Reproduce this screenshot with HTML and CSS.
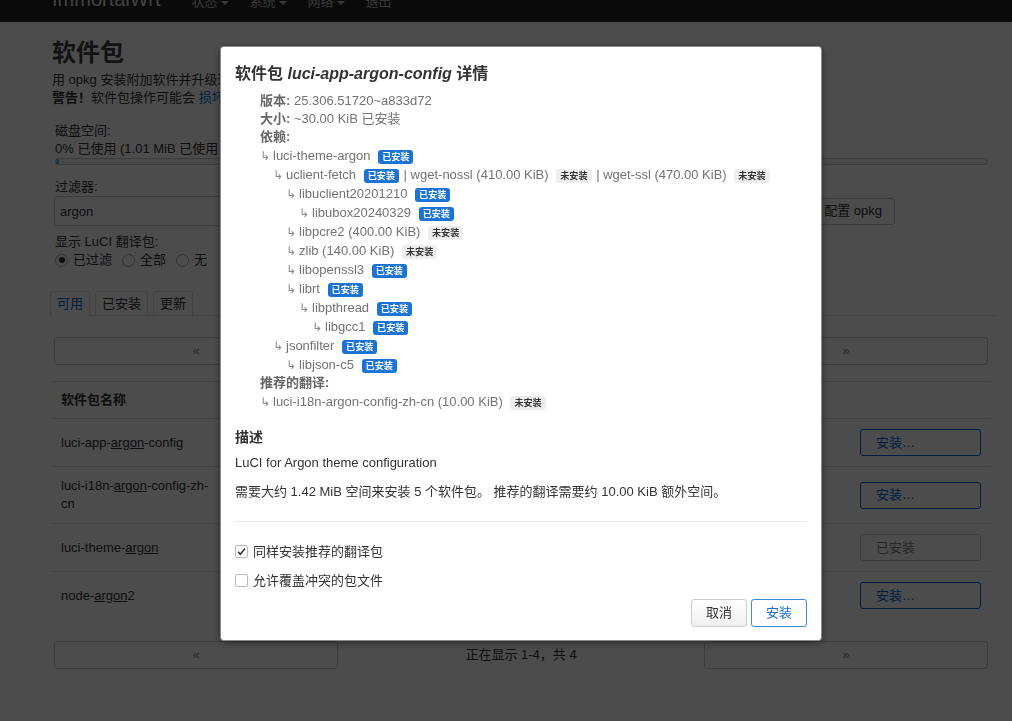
FILE: index.html
```html
<!DOCTYPE html>
<html lang="zh-CN">
<head>
    <meta charset="UTF-8">
    <meta name="viewport" content="width=device-width, initial-scale=1.0">
    <title>软件包 - ImmortalWrt</title>
    <link rel="stylesheet" href="styles.css">
</head>
<body>
    <header class="topbar">
        <div class="topbar-inner">
            <a href="#" class="brand">ImmortalWrt</a>
            <ul class="nav">
                <li><a href="#">状态</a><span class="caret"></span></li>
                <li><a href="#">系统</a><span class="caret"></span></li>
                <li><a href="#">网络</a><span class="caret"></span></li>
                <li><a href="#">退出</a></li>
            </ul>
        </div>
    </header>

    <div class="main">
        <h2>软件包</h2>
        <div class="intro">
            <p>用 opkg 安装附加软件并升级现有的软件包。</p>
            <p><strong>警告！</strong>软件包操作可能会 <a href="#">损坏你的设备</a>！</p>
        </div>

        <div class="controls">
            <div class="field">
                <div class="field-label">磁盘空间:</div>
                <div class="usage">0% 已使用 (1.01 MiB 已使用，共 423.18 MiB)</div>
                <div class="progress"><div class="progress-bar" style="width: 0.3%"></div></div>
            </div>
            <div class="field field-filter">
                <div class="field-label">过滤器:</div>
                <div class="filter-row">
                    <input type="text" class="form-input" value="argon">
                    <button class="btn">配置 opkg</button>
                </div>
            </div>
            <div class="field field-i18n">
                <div class="field-label">显示 LuCI 翻译包:</div>
                <div class="radios">
                    <span class="radio"><span class="dot on"></span>已过滤</span>
                    <span class="radio"><span class="dot"></span>全部</span>
                    <span class="radio"><span class="dot"></span>无</span>
                </div>
            </div>
        </div>

        <ul class="tabs">
            <li class="active">可用</li>
            <li>已安装</li>
            <li>更新</li>
        </ul>

        <div class="pager">
            <button class="btn pager-btn">&laquo;</button>
            <span class="pager-info">正在显示 1-4，共 4</span>
            <button class="btn pager-btn">&raquo;</button>
        </div>

        <table class="pkg-table">
            <colgroup>
                <col class="col-name">
                <col class="col-ver">
                <col class="col-size">
                <col>
                <col class="col-act">
            </colgroup>
            <thead>
                <tr><th>软件包名称</th><th>版本</th><th>大小 (.ipk)</th><th>描述</th><th></th></tr>
            </thead>
            <tbody>
                <tr>
                    <td>luci-app-<u>argon</u>-config</td>
                    <td>25.306.51720~a833d72</td>
                    <td>~30.00 KiB</td>
                    <td>LuCI for Argon theme configuration</td>
                    <td><button class="btn btn-action">安装…</button></td>
                </tr>
                <tr>
                    <td>luci-i18n-<u>argon</u>-config-zh-cn</td>
                    <td>25.306.51720~a833d72</td>
                    <td>~10.00 KiB</td>
                    <td>Translation for luci-app-argon-config</td>
                    <td><button class="btn btn-action">安装…</button></td>
                </tr>
                <tr>
                    <td>luci-theme-<u>argon</u></td>
                    <td>2.3.2-r20250207</td>
                    <td>~380.00 KiB</td>
                    <td>Argon theme</td>
                    <td><button class="btn btn-action" disabled>已安装</button></td>
                </tr>
                <tr>
                    <td>node-<u>argon</u>2</td>
                    <td>0.31.2-r1</td>
                    <td>~60.00 KiB</td>
                    <td>Node.js package for hashing passwords</td>
                    <td><button class="btn btn-action">安装…</button></td>
                </tr>
            </tbody>
        </table>

        <div class="pager pager-bottom">
            <button class="btn pager-btn">&laquo;</button>
            <span class="pager-info">正在显示 1-4，共 4</span>
            <button class="btn pager-btn">&raquo;</button>
        </div>
    </div>

    <div class="overlay">
        <div class="modal">
            <h4>软件包 <em>luci-app-argon-config</em> 详情</h4>
            <ul class="pkg-info">
                <li class="kv"><strong>版本:</strong> 25.306.51720~a833d72</li>
                <li class="kv"><strong>大小:</strong> ~30.00 KiB 已安装</li>
                <li>
                    <div class="kv"><strong>依赖:</strong></div>
                    <div class="dep"><span class="arr">↳</span>luci-theme-argon <span class="label">已安装</span></div>
                    <div class="dep lv1"><span class="arr">↳</span>uclient-fetch <span class="label">已安装</span> | wget-nossl (410.00 KiB) <span class="label na">未安装</span> | wget-ssl (470.00 KiB) <span class="label na">未安装</span></div>
                    <div class="dep lv2"><span class="arr">↳</span>libuclient20201210 <span class="label">已安装</span></div>
                    <div class="dep lv3"><span class="arr">↳</span>libubox20240329 <span class="label">已安装</span></div>
                    <div class="dep lv2"><span class="arr">↳</span>libpcre2 (400.00 KiB) <span class="label na">未安装</span></div>
                    <div class="dep lv2"><span class="arr">↳</span>zlib (140.00 KiB) <span class="label na">未安装</span></div>
                    <div class="dep lv2"><span class="arr">↳</span>libopenssl3 <span class="label">已安装</span></div>
                    <div class="dep lv2"><span class="arr">↳</span>librt <span class="label">已安装</span></div>
                    <div class="dep lv3"><span class="arr">↳</span>libpthread <span class="label">已安装</span></div>
                    <div class="dep lv4"><span class="arr">↳</span>libgcc1 <span class="label">已安装</span></div>
                    <div class="dep lv1"><span class="arr">↳</span>jsonfilter <span class="label">已安装</span></div>
                    <div class="dep lv2"><span class="arr">↳</span>libjson-c5 <span class="label">已安装</span></div>
                </li>
                <li>
                    <div class="kv"><strong>推荐的翻译:</strong></div>
                    <div class="dep"><span class="arr">↳</span>luci-i18n-argon-config-zh-cn (10.00 KiB) <span class="label na">未安装</span></div>
                </li>
            </ul>

            <h5>描述</h5>
            <p>LuCI for Argon theme configuration</p>
            <p class="space-note">需要大约 1.42 MiB 空间来安装 5 个软件包。 推荐的翻译需要约 10.00 KiB 额外空间。</p>

            <hr>

            <label class="check">
                <span class="box"><svg width="11" height="11" viewBox="0 0 11 11"><path d="M2 5.8l2.3 2.4L9 2.6" fill="none" stroke="#333" stroke-width="1.6"/></svg></span>
                同样安装推荐的翻译包
            </label>
            <label class="check">
                <span class="box"></span>
                允许覆盖冲突的包文件
            </label>

            <div class="actions">
                <button class="mbtn">取消</button>
                <button class="mbtn primary">安装</button>
            </div>
        </div>
    </div>
</body>
</html>
```

FILE: styles.css
```css
* {
    box-sizing: border-box;
}
html, body {
    margin: 0;
    padding: 0;
}
body {
    font-family: "Liberation Sans", "Noto Sans CJK SC", sans-serif;
    font-size: 13px;
    line-height: 18px;
    color: #333;
    background: #fff;
}
a {
    color: #0069d6;
    text-decoration: none;
}
p {
    margin: 0;
}

/* top bar, page is scrolled so only its lower part shows */
.topbar {
    height: 22px;
    background: #222;
    overflow: hidden;
}
.topbar-inner {
    display: flex;
    align-items: baseline;
    margin-top: -21px;
    padding-left: 52px;
}
.brand {
    font-size: 20px;
    line-height: 40px;
    color: #ddd;
    margin-right: 31px;
}
.nav {
    display: flex;
    list-style: none;
    margin: 0;
    padding: 0;
}
.nav li {
    margin-right: 21px;
}
.nav a {
    color: #bbb;
    line-height: 40px;
}
.caret {
    display: inline-block;
    margin-left: 3px;
    vertical-align: middle;
    border-left: 4px solid transparent;
    border-right: 4px solid transparent;
    border-top: 4px solid #bbb;
}

.main {
    padding: 16px 16px 0 50px;
}
.main h2 {
    margin: 0 0 3px 2px;
    font-size: 24px;
    line-height: 30px;
    color: #404040;
}
.intro {
    padding-left: 2px;
}

.controls {
    margin-top: 15px;
    padding: 0 8px 0 5px;
}
.field-filter {
    margin-top: 13px;
}
.field-i18n {
    margin-top: 7px;
}
.progress {
    height: 7px;
    border: 1px solid #ccc;
    border-radius: 3px;
    background: #f5f5f5;
}
.progress-bar {
    height: 100%;
    background: #5bc0de;
}
.filter-row {
    display: flex;
    align-items: center;
    padding-right: 93px;
}
.form-input {
    flex: 1;
    height: 30px;
    margin-left: -1px;
    padding: 0 5px;
    font: inherit;
    color: #333;
    border: 1px solid #ccc;
    border-radius: 3px;
}
.filter-row .btn {
    margin-left: 8px;
}
.btn {
    height: 27px;
    padding: 0 12px;
    font: inherit;
    color: #333;
    background: #fff;
    border: 1px solid #ccc;
    border-radius: 3px;
}
.radios {
    display: flex;
    gap: 10px;
    height: 18px;
    align-items: center;
}
.radio {
    display: flex;
    align-items: center;
}
.dot {
    width: 13px;
    height: 13px;
    margin-right: 5px;
    border: 1px solid #aaa;
    border-radius: 50%;
    background: #fff;
    display: flex;
    align-items: center;
    justify-content: center;
}
.dot.on::after {
    content: "";
    width: 6px;
    height: 6px;
    border-radius: 50%;
    background: #333;
}

.tabs {
    display: flex;
    gap: 5px;
    margin: 22px 0 0;
    padding: 0;
    list-style: none;
    border-bottom: 1px solid #ddd;
}
.tabs li {
    height: 25px;
    margin-bottom: -1px;
    padding: 0 6px;
    line-height: 23px;
    border: 1px solid #ddd;
    border-radius: 3px 3px 0 0;
    background: #fff;
}
.tabs li.active {
    color: #0069d6;
    border-bottom-color: #fff;
}

.pager {
    display: flex;
    align-items: center;
    margin: 21px 8px 0 4px;
}
.pager-btn {
    width: 284px;
    height: 28px;
    color: #888;
    font-size: 13px;
}
.pager-info {
    flex: 1;
    text-align: center;
}
.pager-bottom {
    margin-top: 22px;
}

.pkg-table {
    width: calc(100% - 6px);
    margin: 16px 0 0 1px;
    border-collapse: collapse;
    table-layout: fixed;
}
.col-name {
    width: 176px;
}
.col-ver {
    width: 160px;
}
.col-size {
    width: 100px;
}
.col-act {
    width: 141px;
}
.pkg-table th,
.pkg-table td {
    text-align: left;
    vertical-align: middle;
    border-top: 1px solid #ddd;
    padding: 10px;
}
.pkg-table th {
    padding: 9px 10px;
}
.btn-action {
    width: 121px;
    padding: 0 15px;
    text-align: left;
    color: #0069d6;
    border-color: #0069d6;
}
.btn-action:disabled {
    color: #888;
    border-color: #ccc;
}

/* modal */
.overlay {
    position: fixed;
    top: 0;
    left: 0;
    right: 0;
    bottom: 0;
    display: flex;
    align-items: flex-start;
    padding: 47px 0 0 221px;
    background: rgba(0, 0, 0, 0.7);
}
.modal {
    width: 600px;
    padding: 16px 14px 13px;
    background: #fff;
    border-radius: 3px;
    box-shadow: 0 0 0 1px #8a8a8a, 0 2px 10px rgba(0, 0, 0, 0.5);
}
.modal h4 {
    margin: 0;
    font-size: 16px;
    line-height: 22px;
    color: #333;
}
.pkg-info {
    margin: 7px 0 0;
    padding: 0 0 0 25px;
    list-style: none;
    color: #737373;
}
.pkg-info strong {
    color: #666;
}
.kv {
    height: 18px;
    line-height: 18px;
}
.dep {
    height: 19px;
    line-height: 19px;
    white-space: nowrap;
}
.lv1 { padding-left: 13px; }
.lv2 { padding-left: 26px; }
.lv3 { padding-left: 39px; }
.lv4 { padding-left: 52px; }
.arr {
    display: inline-block;
    width: 13px;
    font-family: "DejaVu Sans", sans-serif;
    font-size: 12px;
    color: #888;
}
.label {
    display: inline-block;
    margin: 0 1px 0 4px;
    padding: 0 4px;
    font-size: 9.1px;
    font-weight: bold;
    line-height: 14px;
    color: #fff;
    background: #1b74d4;
    border-radius: 3px;
    vertical-align: middle;
}
.label.na {
    color: #333;
    background: #eee;
}
.modal h5 {
    margin: 16px 0 0;
    font-size: 14px;
    line-height: 20px;
    color: #333;
}
.modal h5 + p {
    margin-top: 7px;
}
.space-note {
    margin-top: 11px;
}
.modal hr {
    margin: 20px 0 15px;
    border: 0;
    border-top: 1px solid #e5e5e5;
}
.check {
    display: flex;
    align-items: center;
    gap: 5px;
    height: 29px;
}
.box {
    width: 13px;
    height: 13px;
    display: flex;
    align-items: center;
    justify-content: center;
    border: 1px solid #bbb;
    border-radius: 2px;
    background: #fff;
}
.actions {
    display: flex;
    justify-content: flex-end;
    gap: 4px;
    margin-top: 4px;
}
.mbtn {
    height: 28px;
    padding: 0 14px;
    font: inherit;
    color: #333;
    background: linear-gradient(#fff, #f0f0f0);
    border: 1px solid #ccc;
    border-radius: 3px;
}
.mbtn.primary {
    color: #1b6fcc;
    background: #fff;
    border-color: #3d8ae0;
}
```
